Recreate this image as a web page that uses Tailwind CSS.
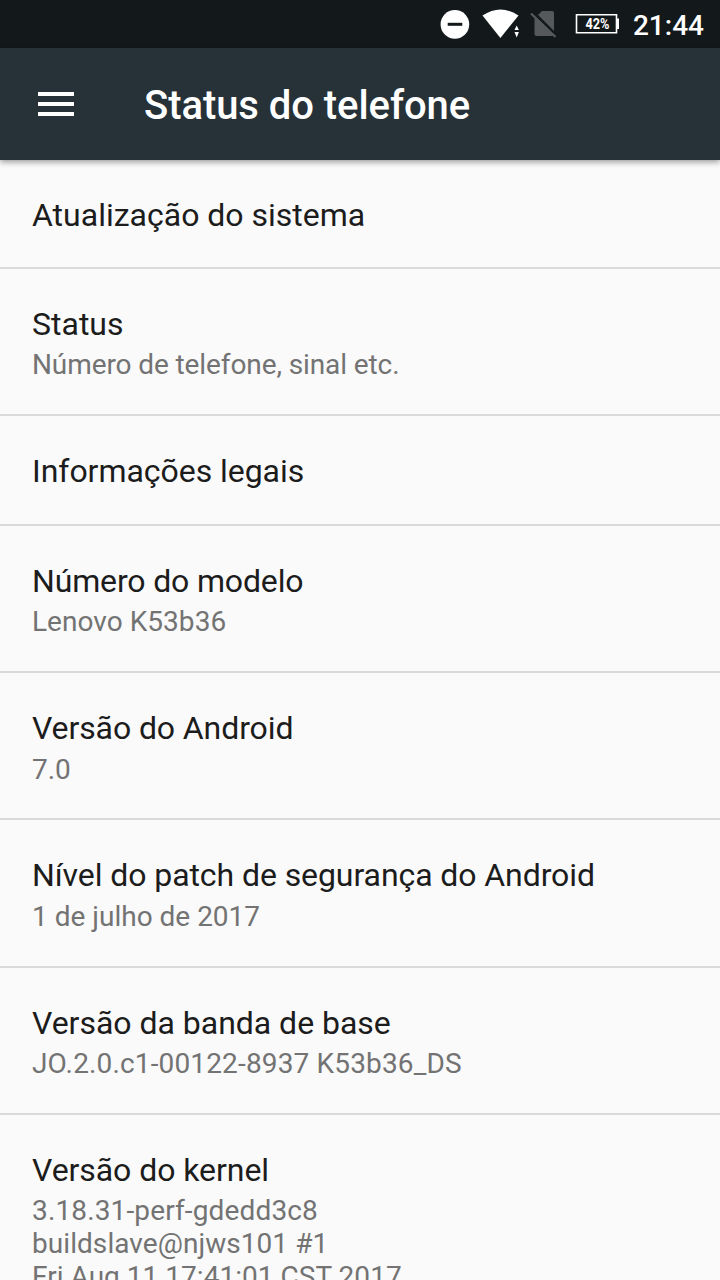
<!DOCTYPE html>
<html lang="pt-BR">
<head>
<meta charset="utf-8">
<title>Status do telefone</title>
<script src="https://cdn.jsdelivr.net/npm/@tailwindcss/browser@4"></script>
</head>
<body class="w-[720px] h-[1280px] overflow-hidden bg-[#fafafa] font-[Roboto,sans-serif] text-[#1c1c1c]">
<div class="flex flex-col h-[1280px] overflow-hidden">
<div class="h-12 shrink-0 bg-[#13191b] flex items-center justify-between pl-[440px] pr-4 text-white">
<svg class="w-[184px] h-12 shrink-0" viewBox="440 0 184 48">
<circle cx="454.900" cy="24.400" r="14.300" fill="#fff"/><path d="M447.700 24.300h14.600" stroke="#13191b" stroke-width="3"/>
<path d="M482.500 15.500Q500.500 3.500 518.500 15.500L500.400 38Z" fill="#fff"/>
<path d="M513 24.500h7v14h-7z" fill="#13191b"/><path d="M514.500 30l2.200-4.500 2.200 4.500zM514.500 32l2.200 5.500 2.200-5.500z" fill="#fff"/>
<path d="M542 11h10q2 0 2 2v21q0 2-2 2h-15.500q-2 0-2-2V18.500z" fill="#55595b"/><path d="M532.500 11.500l25 25" stroke="#13191b" stroke-width="3"/><path d="M531 13.500l24.500 23.500" stroke="#55595b" stroke-width="2.300"/>
<path d="M576.500 14.700h40v18h-40z" fill="none" stroke="#fff" stroke-width="1.600"/><path d="M617 18.500h2v10.500h-2z" fill="#fff"/>
<text x="585.500" y="29" fill="#fff" font-size="14" font-weight="700" font-family="Roboto" textLength="24" lengthAdjust="spacingAndGlyphs">42%</text>
</svg>
<span class="text-[28px] font-medium leading-[50px] pt-[3px]">21:44</span>
</div>
<header class="h-28 shrink-0 bg-[#263238] flex items-center pl-[38px] text-white shadow-[0_2px_6px_rgba(0,0,0,.4)] z-10">
<svg class="w-9 h-6" viewBox="0 0 36 24"><path d="M0 2h36M0 12h36M0 22h36" stroke="#fff" stroke-width="4"/></svg>
<h1 class="ml-[70px] pt-1 text-[40px] font-medium leading-none tracking-[-0.06px]">Status do telefone</h1>
</header>
<main class="text-[32px] leading-[38px]">
<section class="h-[109px] border-b-2 border-[#dadada] px-8 pt-9"><h2>Atualização do sistema</h2></section>
<section class="h-[147px] border-b-2 border-[#dadada] px-8 pt-9"><h2>Status</h2><p class="text-[28px] leading-[33px] mt-[5px] text-[#737373] tracking-[-0.1px]">Número de telefone, sinal etc.</p></section>
<section class="h-[110px] border-b-2 border-[#dadada] px-8 pt-9"><h2 class="tracking-[-0.04px]">Informações legais</h2></section>
<section class="h-[147px] border-b-2 border-[#dadada] px-8 pt-9"><h2 class="tracking-[-0.15px]">Número do modelo</h2><p class="text-[28px] leading-[33px] mt-[5px] text-[#737373] tracking-[0.04px]">Lenovo K53b36</p></section>
<section class="h-[147px] border-b-2 border-[#dadada] px-8 pt-9"><h2 class="tracking-[-0.1px]">Versão do Android</h2><p class="text-[28px] leading-[33px] mt-1.5 text-[#737373]">7.0</p></section>
<section class="h-[148px] border-b-2 border-[#dadada] px-8 pt-9"><h2 class="tracking-[-0.08px]">Nível do patch de segurança do Android</h2><p class="text-[28px] leading-[33px] mt-1.5 text-[#737373]">1 de julho de 2017</p></section>
<section class="h-[147px] border-b-2 border-[#dadada] px-8 pt-9"><h2 class="tracking-[-0.02px]">Versão da banda de base</h2><p class="text-[28px] leading-[33px] mt-[5px] text-[#737373] tracking-[0.15px]">JO.2.0.c1-00122-8937 K53b36_DS</p></section>
<section class="px-8 pt-9"><h2 class="tracking-[-0.06px]">Versão do kernel</h2><p class="text-[28px] leading-[33px] mt-[5px] text-[#737373] tracking-[0.06px]"><span class="tracking-[0.14px]">3.18.31-perf-gdedd3c8</span><br>buildslave@njws101 #1<br><span class="tracking-[0.03px]">Fri Aug 11 17:41:01 CST 2017</span></p></section>
</main>
</div>
</body>
</html>
